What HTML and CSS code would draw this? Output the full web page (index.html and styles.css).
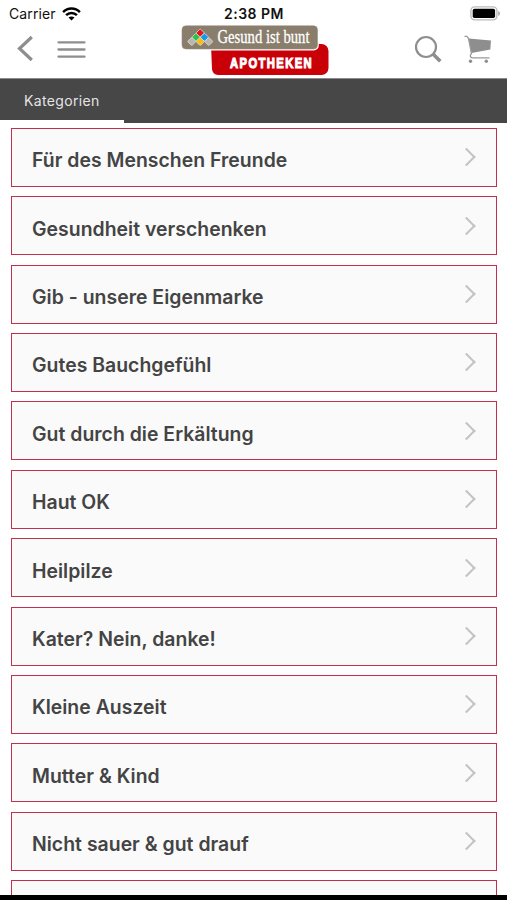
FILE: index.html
```html
<!DOCTYPE html>
<html lang="de">
<head>
<meta charset="utf-8">
<title>Kategorien</title>
<link rel="stylesheet" href="styles.css">
</head>
<body>
<div class="screen">
  <header class="header">
    <div class="status">
      <div class="carrier"><span>Carrier</span>
        <svg width="19" height="14" viewBox="0 0 19 14" fill="none" stroke="#000" stroke-width="2.5"><path d="M1.1 5.1C5.8.4 13.2.4 17.9 5.1M4.1 8.2c3-3 7.8-3 10.8 0"/><path d="M9.5 13.6 6.5 10.6c1.7-1.5 4.3-1.5 6 0z" fill="#000" stroke="none"/></svg>
      </div>
      <div class="time">2:38 PM</div>
      <svg class="battery" width="31" height="15" viewBox="0 0 31 15"><rect x=".9" y=".9" width="26" height="13" rx="3.8" fill="#fff" stroke="#bbb" stroke-width="1.4"/><rect x="2.7" y="2.7" width="22.4" height="9.4" rx="1.8"/><path d="M28.300 5v5c2-.9 2-4.1 0-5z" fill="#999"/></svg>
    </div>
    <nav class="toolbar">
      <div class="tools-left">
        <svg width="17" height="28" viewBox="0 0 17 28" fill="none" stroke="#8e8e8e" stroke-width="3.2"><path d="M14.8 2 2.500 13.500l12.300 11.500"/></svg>
        <svg width="29" height="20" viewBox="0 0 29 20" stroke="#8e8e8e" stroke-width="2.3" stroke-linecap="round"><path d="M1.5 3.300h26M1.5 10.500h26M1.5 17.700h26"/></svg>
      </div>
      <svg class="logo" width="150" height="52" viewBox="0 0 150 52">
        <path d="M31 20h106V19h4.500a7 7 0 0 1 7 7v17a7 7 0 0 1-7 7H38a6 6 0 0 1-6-6z" fill="#c90008"/>
        <rect x="1.200" y=".5" width="137.600" height="25" rx="5" fill="#fff"/>
        <rect x="2" y=".8" width="135.500" height="23.200" rx="4" fill="#897d6c" stroke="#9a8f80" stroke-width=".6"/>
        <g transform="translate(20.200 8) rotate(45)" stroke="#ddd9d2" stroke-width=".8">
          <rect x="-3" y="-3" width="6" height="6" rx="1" fill="#e3141b"/>
          <rect x="3" y="-3" width="6" height="6" rx="1" fill="#1499f0"/>
          <rect x="-3" y="3" width="6" height="6" rx="1" fill="#27c34b"/>
          <rect x="3" y="3" width="6" height="6" rx="1" fill="#f8bc16"/>
          <rect x="9" y="-3" width="6" height="6" rx="1" fill="#b9b6b1"/>
          <rect x="-3" y="9" width="6" height="6" rx="1" fill="#b9b6b1"/>
        </g>
        <text class="logo-name" x="37.500" y="18" textLength="92" lengthAdjust="spacingAndGlyphs">Gesund ist bunt</text>
        <text class="logo-type" transform="translate(50 42.800) scale(.75 1)" x="0" y="0" textLength="109" lengthAdjust="spacing">APOTHEKEN</text>
      </svg>
      <div class="tools-right">
        <svg width="28" height="28" viewBox="0 0 28 28" fill="none" stroke="#8e8e8e"><circle cx="12" cy="12" r="10" stroke-width="2.200"/><path d="m19 19 7.300 7.200" stroke-width="3.600"/></svg>
        <svg width="28" height="28" viewBox="0 0 28 28"><path d="M4.500 3.500 27 5.500 26.300 14.500 7.500 18z" fill="#8e8e8e"/><path d="M.5 1.300h2.300l1.700 2 3 15.500c-1.700 1-1.700 4 1 4H25.500" fill="none" stroke="#999" stroke-width="1.300"/><g fill="#8e8e8e"><circle cx="6.500" cy="26.200" r="1.700"/><circle cx="22.300" cy="26.200" r="1.700"/></g></svg>
      </div>
    </nav>
  </header>
  <div class="tabs"><div class="tab">Kategorien</div></div>
  <main class="list">
    <div class="card"><span>Für des Menschen Freunde</span><i class="chevron"></i></div>
    <div class="card"><span>Gesundheit verschenken</span><i class="chevron"></i></div>
    <div class="card"><span>Gib - unsere Eigenmarke</span><i class="chevron"></i></div>
    <div class="card"><span>Gutes Bauchgefühl</span><i class="chevron"></i></div>
    <div class="card"><span>Gut durch die Erkältung</span><i class="chevron"></i></div>
    <div class="card"><span>Haut OK</span><i class="chevron"></i></div>
    <div class="card"><span>Heilpilze</span><i class="chevron"></i></div>
    <div class="card"><span>Kater? Nein, danke!</span><i class="chevron"></i></div>
    <div class="card"><span>Kleine Auszeit</span><i class="chevron"></i></div>
    <div class="card"><span>Mutter &amp; Kind</span><i class="chevron"></i></div>
    <div class="card"><span>Nicht sauer &amp; gut drauf</span><i class="chevron"></i></div>
    <div class="card"></div>
  </main>
  <div class="bottom"></div>
</div>
</body>
</html>
```
FILE: styles.css
```css
* { box-sizing: border-box; }
body { margin: 0; background: #fff; font-family: Inter, "Liberation Sans", sans-serif; }
svg { display: block; flex: none; }
.screen { height: 900px; display: flex; flex-direction: column; overflow: hidden; }
.header { height: 79px; flex: none; border-bottom: 1px solid #8a8a8a; }
.status { height: 25px; padding: 0 6px 0 9px; display: grid; grid-template-columns: 1fr auto 1fr; align-items: center; color: #111; font-size: 14px; line-height: 27px; }
.carrier { display: flex; align-items: center; gap: 6px; letter-spacing: .1px; }
.time { font-weight: 600; font-size: 14px; letter-spacing: .5px; margin-right: 2px; }
.battery { justify-self: end; }
.toolbar { height: 53px; padding: 0 15px 0 17px; display: grid; grid-template-columns: 1fr 150px 1fr; align-items: center; }
.tools-left { display: flex; align-items: center; gap: 23px; padding-bottom: 5px; }
.logo { margin-top: -2px; }
.tools-right { display: flex; justify-content: flex-end; gap: 22px; padding-bottom: 5px; }
.logo-name { font-family: "Liberation Serif", serif; font-size: 18px; fill: #fff; stroke: #fff; stroke-width: .3px; }
.logo-type { font-family: "Liberation Sans", sans-serif; font-weight: bold; font-size: 15px; fill: #fff; stroke: #fff; stroke-width: 1.100px; }
.tabs { height: 44px; flex: none; background: #474747; display: flex; }
.tab { width: 123.500px; padding-left: 24px; border-bottom: 3px solid #fff; color: #e4e4e4; font-size: 14px; line-height: 43px; letter-spacing: .35px; }
.list { flex: 1; min-height: 0; overflow: hidden; padding: 4.800px 10px 0 11px; display: flex; flex-direction: column; gap: 9.400px; }
.card { height: 59px; flex: none; border: 1.500px solid #c22f50; background: #fafafa; display: flex; align-items: center; justify-content: space-between; padding: 3px 23px 0 20px; color: #444; font-size: 19.400px; font-weight: 600; letter-spacing: .03px; }
.card span { padding-top: 3px; }
.chevron { width: 13px; height: 13px; border: solid #c3c3c3; border-width: 2px 2px 0 0; transform: translateY(-1.500px) rotate(45deg); }
.bottom { height: 5px; flex: none; background: #000; }
```
